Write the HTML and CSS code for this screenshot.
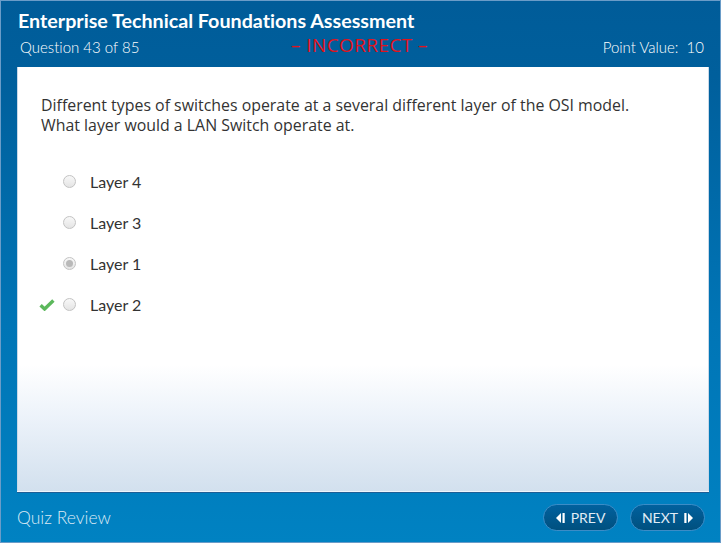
FILE: index.html
```html
<!DOCTYPE html>
<html>
<head>
<meta charset="utf-8">
<link rel="stylesheet" href="styles.css">
</head>
<body>
<div class="frame">
  <div class="header">
    <div class="title">Enterprise Technical Foundations Assessment</div>
    <div class="subrow">
      <span class="qnum">Question 43 of 85</span>
      <span class="status">– INCORRECT –</span>
      <span class="points">Point Value:&nbsp; 10</span>
    </div>
  </div>
  <div class="panel">
    <p class="question">Different types of switches operate at a several different layer of the OSI model.<br>What layer would a LAN Switch operate at.</p>
    <ul class="options">
      <li class="option"><span class="mark"></span><span class="radio"></span><span class="label">Layer 4</span></li>
      <li class="option"><span class="mark"></span><span class="radio"></span><span class="label">Layer 3</span></li>
      <li class="option"><span class="mark"></span><span class="radio selected"></span><span class="label">Layer 1</span></li>
      <li class="option"><span class="mark"><svg width="16" height="12" viewBox="0 0 16 12"><path d="M1.6 6.2 L5.6 10 L14.4 1.6" fill="none" stroke="#5cb85c" stroke-width="3.4" stroke-linejoin="miter"/></svg></span><span class="radio"></span><span class="label">Layer 2</span></li>
    </ul>
  </div>
  <div class="footer">
    <span class="review">Quiz Review</span>
    <div class="nav">
      <button class="btn"><svg width="9" height="10" viewBox="0 0 9 10"><path d="M5 0 L0 5 L5 10 Z" fill="#fff"/><rect x="6.5" y="0" width="2.2" height="10" fill="#fff"/></svg>PREV</button>
      <button class="btn">NEXT<svg width="9" height="10" viewBox="0 0 9 10"><rect x="0.3" y="0" width="2.2" height="10" fill="#fff"/><path d="M4 0 L9 5 L4 10 Z" fill="#fff"/></svg></button>
    </div>
  </div>
</div>
</body>
</html>
```
FILE: styles.css
```css
html, body {
  margin: 0;
  padding: 0;
}
body {
  width: 721px;
  height: 543px;
  overflow: hidden;
  font-family: "Lato", "Open Sans", sans-serif;
  font-variant-ligatures: none;
}
.frame {
  box-sizing: border-box;
  width: 721px;
  height: 543px;
  border: 1px solid #6a9cc8;
  background: linear-gradient(to bottom, #005c99 0%, #005f9c 14%, #0075b6 60%, #0082c2 100%);
  display: flex;
  flex-direction: column;
}
.header {
  height: 66px;
  padding: 0 16px 0 17px;
  color: #fff;
}
.title {
  font-size: 19.7px;
  font-weight: 700;
  margin-top: 8px;
  line-height: 24px;
}
.subrow {
  display: flex;
  align-items: baseline;
  margin-top: 2px;
  line-height: 22px;
}
.qnum {
  font-size: 15px;
  font-weight: 300;
  margin-left: 2px;
  width: 271px;
}
.status {
  color: #e3131b;
  font-family: "Open Sans", sans-serif;
  font-size: 19px;
  font-weight: 400;
  letter-spacing: 0.4px;
  white-space: pre;
  position: relative;
  top: -1px;
}
.points {
  margin-left: auto;
  font-size: 15px;
  font-weight: 300;
}
.panel {
  box-sizing: border-box;
  margin: 0 11px 0 16px;
  height: 426px;
  background: linear-gradient(to bottom, #ffffff 0%, #ffffff 70%, #edf3fa 82%, #d2e0ee 100%);
  border-bottom: 1px solid #1d5e96;
  box-shadow: inset 0 -1px 0 #eef4fa, inset 1px 0 0 #c8d8e8, inset -1px 0 0 #c8d8e8;
  padding: 28px 24px 0 24px;
}
.question {
  margin: 0;
  font-family: "Open Sans", sans-serif;
  font-size: 15.9px;
  line-height: 20px;
  color: #333;
}
.options {
  list-style: none;
  margin: 26px 0 0 0;
  padding: 0;
}
.option {
  display: flex;
  align-items: center;
  height: 41px;
}
.mark {
  width: 22px;
  margin-left: -2px;
  display: flex;
  align-items: center;
}
.radio {
  box-sizing: border-box;
  width: 13px;
  height: 13px;
  border-radius: 50%;
  border: 1px solid #c3c3c3;
  background: linear-gradient(to bottom, #f8f8f8, #e4e4e4);
  margin-left: 2px;
  position: relative;
}
.radio.selected::after {
  content: "";
  position: absolute;
  left: 2px;
  top: 2px;
  width: 7px;
  height: 7px;
  border-radius: 50%;
  background: #b9b9b9;
}
.label {
  margin-left: 14px;
  font-size: 16px;
  color: #333;
}
.footer {
  flex: 1;
  display: flex;
  align-items: center;
  padding: 0 15px 0 16px;
}
.review {
  color: #dbe9f5;
  font-size: 17.5px;
  font-weight: 300;
}
.nav {
  margin-left: auto;
  display: flex;
  gap: 12px;
}
.btn {
  box-sizing: border-box;
  height: 27px;
  width: 75px;
  border-radius: 14px;
  border: 1px solid #3c8cc6;
  background: linear-gradient(to bottom, #01619e, #00507f);
  color: #e0ecf6;
  font-family: "Lato", sans-serif;
  font-size: 14px;
  font-weight: 400;
  display: flex;
  align-items: center;
  justify-content: center;
  gap: 6px;
  padding: 0;
}
```
